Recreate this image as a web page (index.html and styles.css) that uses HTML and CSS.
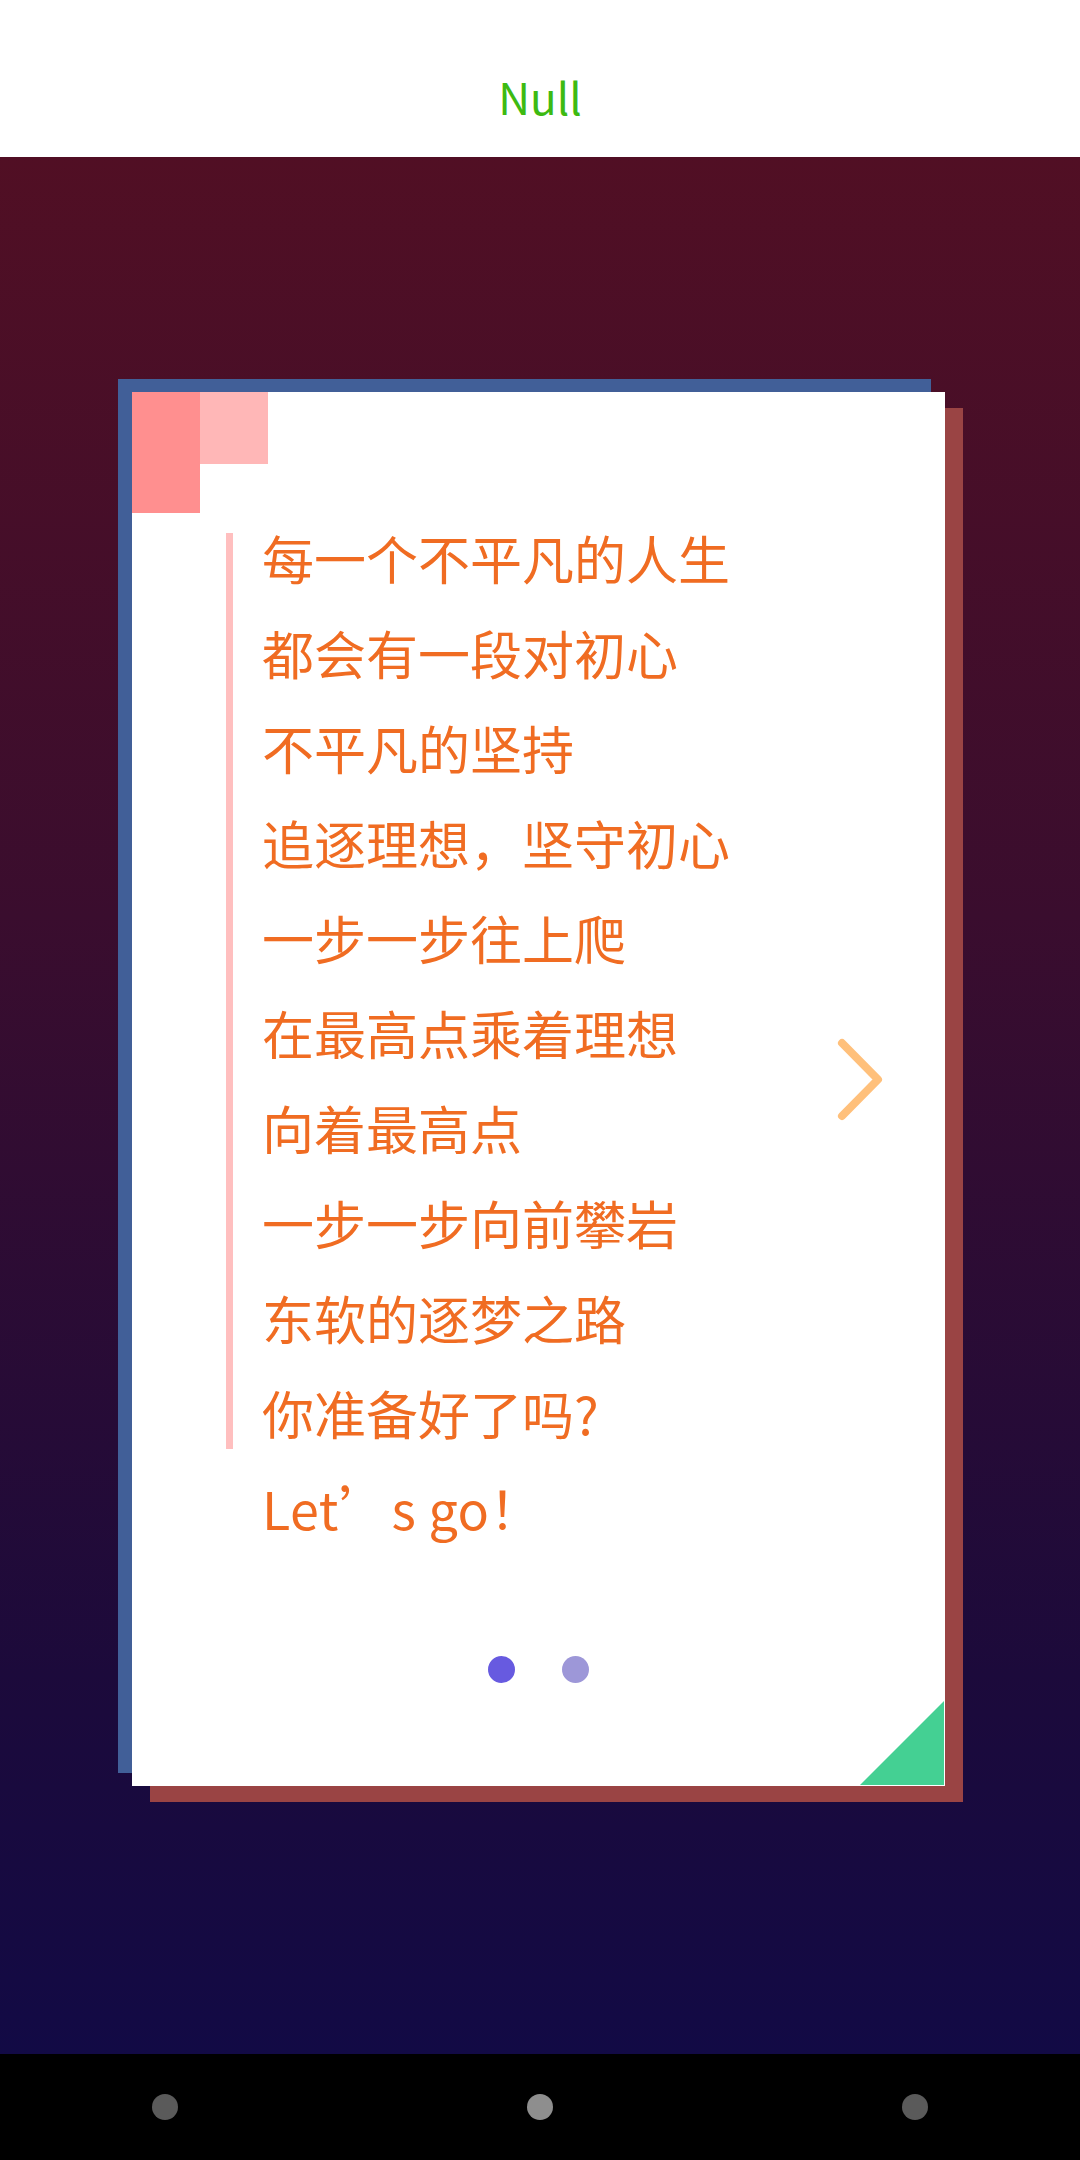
FILE: index.html
```html
<!DOCTYPE html>
<html lang="zh-CN">
<head>
<meta charset="utf-8">
<title>Null</title>
<link rel="stylesheet" href="styles.css">
</head>
<body>
<header class="topbar"><span class="title">Null</span></header>
<main class="stage">
  <section class="card">
    <div class="corner"><div class="sq-a"></div><div class="sq-b"></div></div>
    <div class="poem">
      <div class="verse">
        <div class="lines">
          <p>每一个不平凡的人生</p>
          <p>都会有一段对初心</p>
          <p>不平凡的坚持</p>
          <p>追逐理想，坚守初心</p>
          <p>一步一步往上爬</p>
          <p>在最高点乘着理想</p>
          <p>向着最高点</p>
          <p>一步一步向前攀岩</p>
          <p>东软的逐梦之路</p>
          <p>你准备好了吗?</p>
        </div>
      </div>
      <p class="last">Let’s go！</p>
    </div>
    <div class="dots"><span class="dot on"></span><span class="dot"></span></div>
    <svg class="next" width="60" height="100" viewBox="0 0 60 100"><path d="M9 9 L45 45.5 L9 82" fill="none" stroke="#ffc07b" stroke-width="8" stroke-linecap="round" stroke-linejoin="round"/></svg>
    <div class="tri"></div>
  </section>
</main>
<nav class="navbar"><span class="nd"></span><span class="nd mid"></span><span class="nd"></span></nav>
</body>
</html>
```
FILE: styles.css
```css
* { box-sizing: border-box; }
html, body { margin: 0; padding: 0; }
body { width: 1080px; height: 2160px; overflow: hidden; font-family: "Noto Sans CJK SC", "Noto Sans", sans-serif; display: flex; flex-direction: column; }
.topbar { height: 157px; background: #fff; display: flex; justify-content: center; align-items: flex-start; }
.title { color: #3dba12; font-size: 44px; line-height: 1; margin-top: 74px; font-family: "Noto Sans CJK SC", "Noto Sans", sans-serif; }
.stage { height: 1897px; background: linear-gradient(180deg, #510f24 0%, #3a0d2e 40%, #1c0a3b 80%, #120a45 100%); padding: 235px 0 0 132px; }
.card { position: relative; width: 813px; height: 1394px; background: #fff; box-shadow: -14px -13px 0 #415f98, 18px 16px 0 #9a4444; display: flex; flex-direction: column; }
.corner { display: flex; align-items: flex-start; height: 121px; }
.sq-a { width: 68px; height: 121px; background: #ff8f8f; }
.sq-b { width: 68px; height: 72px; background: #ffb7b7; }
.poem { margin-left: 94px; color: #f06c22; font-size: 52px; line-height: 95px; }
.poem p { margin: 0; white-space: nowrap; }
.verse { display: flow-root; border-left: 7px solid #ffbfbf; padding-left: 29px; margin-top: 20px; height: 916px; }
.lines { margin-top: -23px; }
.poem .last { padding-left: 36px; margin-top: 11px; letter-spacing: 0.5px; }
.dots { display: flex; justify-content: center; gap: 47px; margin-top: 101px; }
.dot { width: 27px; height: 27px; border-radius: 50%; background: #9d97d8; }
.dot.on { background: #675ae0; }
.next { position: absolute; left: 701px; top: 642px; }
.tri { position: absolute; right: 1px; bottom: 1px; width: 0; height: 0; border-style: solid; border-width: 0 0 84px 84px; border-color: transparent transparent #44d093 transparent; }
.navbar { height: 106px; background: #000; display: grid; grid-template-columns: 330px 420px 330px; justify-items: center; align-items: center; }
.nd { width: 26px; height: 26px; border-radius: 50%; background: #5a5a5a; }
.nd.mid { background: #8e8e8e; }
```
